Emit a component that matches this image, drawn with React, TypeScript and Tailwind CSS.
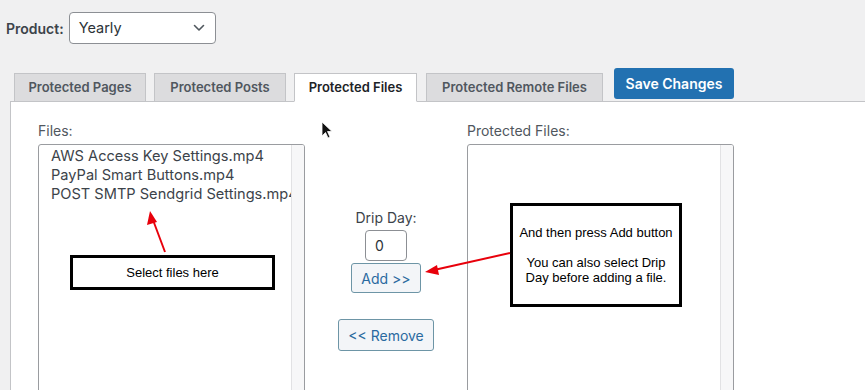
import React from 'react';

const files = ['AWS Access Key Settings.mp4', 'PayPal Smart Buttons.mp4', 'POST SMTP Sendgrid Settings.mp4'];

const tabs = [
    { label: 'Protected Pages', w: 'w-[132px]', active: false },
    { label: 'Protected Posts', w: 'w-[132px]', active: false },
    { label: 'Protected Files', w: 'w-[123px]', active: true },
    { label: 'Protected Remote Files', w: 'w-[177px]', active: false },
];

const ListBox: React.FC<{ items: string[] }> = ({ items }) => (
    <div className="relative h-[270px] w-[267px] rounded-[3px] border border-[#9a9ca0] bg-white overflow-hidden">
        <div className="absolute right-0 top-0 bottom-0 w-[13px] border-l border-[#e2e2e4] bg-[#f7f7f8]" />
        <ul className="pl-[12px] pr-[13px] pt-[2px] text-[14.6px] leading-[19px] text-[#3c434a] whitespace-nowrap overflow-hidden">
            {items.map((f) => (
                <li key={f}>{f}</li>
            ))}
        </ul>
    </div>
);

const App: React.FC = () => {
    return (
        <div className="relative h-[390px] w-[865px] overflow-hidden bg-[#f0f0f1] font-['Inter',sans-serif] text-[#3c434a]">
            {/* product picker */}
            <div className="flex items-center pl-[6px] pt-[12px]">
                <span className="text-[14px] font-semibold text-[#3c434a]">Product:</span>
                <div className="ml-[5px] flex h-[32px] w-[147px] items-center justify-between rounded-[4px] border border-[#8c8f94] bg-white pl-[9px] pr-[10px]">
                    <span className="text-[14.5px] text-[#2c3338]">Yearly</span>
                    <svg width="12" height="8" viewBox="0 0 12 8" fill="none">
                        <path d="M1.5 1.5 L6 6 L10.5 1.5" stroke="#50575e" strokeWidth="1.6" strokeLinecap="round" strokeLinejoin="round" />
                    </svg>
                </div>
            </div>

            {/* tabs */}
            <div className="mt-[24px] flex items-end pl-[14px]">
                {tabs.map((t, i) => (
                    <div
                        key={t.label}
                        className={`${t.w} ${i > 0 ? (i === 3 ? 'ml-[9px]' : 'ml-[8px]') : ''} relative -mb-px flex h-[29px] items-center justify-center border border-[#c3c4c7] text-[13px] font-semibold ${
                            t.active ? 'z-10 border-b-white bg-white text-[#1d2327]' : 'bg-[#dcdcde] text-[#50575e]'
                        }`}
                    >
                        {t.label}
                    </div>
                ))}
                <button className="mb-[2px] ml-[11px] h-[31px] w-[120px] rounded-[3px] bg-[#2271b1] text-[14px] font-semibold text-white">
                    Save Changes
                </button>
            </div>

            {/* panel */}
            <div className="ml-[10px] h-[300px] border-t border-l border-[#c3c4c7] bg-white pl-[27px] pt-[19px]">
                <div className="flex">
                    <div>
                        <div className="mb-[3px] text-[14px] leading-[20px] text-[#50575e]">Files:</div>
                        <ListBox items={files} />
                    </div>
                    <div className="flex w-[162px] flex-col items-center pt-[87px]">
                        <div className="text-[14px] leading-[20px] text-[#3c434a]">Drip Day:</div>
                        <div className="mt-[2px] flex h-[31px] w-[42px] items-center rounded-[4px] border border-[#8c8f94] bg-white pl-[9px] text-[14px] text-[#2c3338]">
                            0
                        </div>
                        <button className="mt-[2px] h-[30px] w-[70px] rounded-[3px] border border-[#6d95a6] bg-[#f3f5f8] text-[14px] text-[#2a6aa0]">
                            Add &gt;&gt;
                        </button>
                        <button className="mt-[26px] h-[32px] w-[96px] rounded-[3px] border border-[#6d95a6] bg-[#f3f5f8] text-[14px] text-[#2a6aa0]">
                            &lt;&lt; Remove
                        </button>
                    </div>
                    <div>
                        <div className="mb-[3px] text-[14px] leading-[20px] text-[#50575e]">Protected Files:</div>
                        <ListBox items={[]} />
                    </div>
                </div>
            </div>

            {/* annotation callouts */}
            <div className="absolute left-[70px] top-[255px] flex h-[35px] w-[205px] items-center justify-center border-[3px] border-black bg-white font-['Liberation_Sans',Arial,sans-serif] text-[13px] text-black">
                Select files here
            </div>
            <div className="absolute left-[510px] top-[203px] flex h-[104px] w-[172px] flex-col items-center border-[3px] border-black bg-white pt-[19px] text-center font-['Liberation_Sans',Arial,sans-serif] text-[13px] leading-[15px] text-black">
                <span>And then press Add button</span>
                <span className="mt-[15px]">
                    You can also select Drip
                    <br />
                    Day before adding a file.
                </span>
            </div>

            {/* red arrows + cursor */}
            <svg className="pointer-events-none absolute left-0 top-0" width="865" height="390">
                <line x1="165" y1="252" x2="153" y2="220" stroke="#e8000b" strokeWidth="2" />
                <polygon points="150,211 147,225 157,222" fill="#e8000b" />
                <line x1="510" y1="253" x2="434" y2="270" stroke="#e8000b" strokeWidth="2" />
                <polygon points="425,272 437,265 439,275" fill="#e8000b" />
                <path d="M322 122 L322 136 L325.5 132.5 L328 138 L330 137 L327.5 131.5 L332 131.5 Z" fill="#111" stroke="#fff" strokeWidth="0.8" />
            </svg>
        </div>
    );
};

export default App;
